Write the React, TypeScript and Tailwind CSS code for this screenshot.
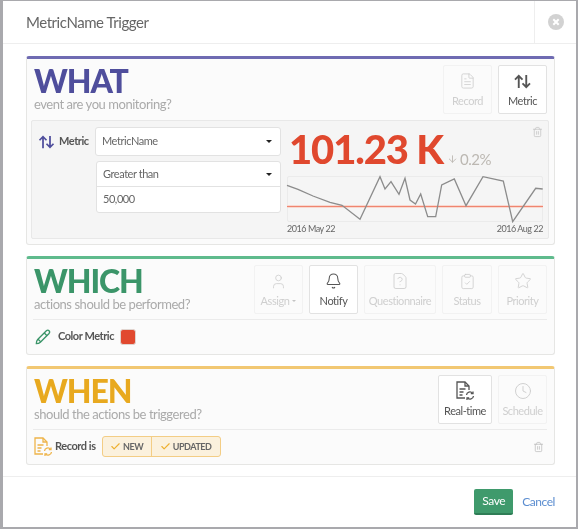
import React from 'react';
import { ArrowDown, Bell, Check, ClipboardCheck, Clock, FileQuestion, FileText, Star, Trash2, User } from 'lucide-react';

const chartPoints = [
  [287, 185.3], [298, 189.3], [313, 196], [330, 202.3], [342, 205.3], [360, 219.3], [380, 176.7], [385, 189],
  [391, 181.7], [399, 194.3], [405, 178.3], [410, 200], [415.5, 204], [420.7, 194], [427.7, 216.7], [435.7, 216.7],
  [441.7, 185], [454.3, 179], [466, 205.7], [483, 176.7], [503.3, 181], [512.7, 221.7], [535.7, 188.3], [542.7, 189],
];

function UpDownIcon({ className }: { className?: string }) {
  return (
    <svg viewBox="0 0 18 16" fill="none" stroke="currentColor" strokeWidth="2" className={className}>
      <path d="M5 15V2M1 6l4-4 4 4" />
      <path d="M13 1v13M9 10l4 4 4-4" />
    </svg>
  );
}

function RecordSyncIcon({ className }: { className?: string }) {
  return (
    <svg viewBox="0 0 20 20" fill="none" stroke="currentColor" strokeWidth="1.3" className={className}>
      <path d="M10 17H2V1h8l4 4v4" />
      <path d="M10 1v4h4M4.5 8h6M4.5 11h4M4.5 14h3" />
      <path d="M11.5 14a3.4 3.4 0 0 1 6-1.8M18.5 15a3.4 3.4 0 0 1-6 1.8" />
      <path d="M18 10.5v2.2h-2.2M12 19v-2.2h2.2" />
    </svg>
  );
}

function PenIcon({ className }: { className?: string }) {
  return (
    <svg viewBox="0 0 18 18" fill="none" stroke="currentColor" strokeWidth="1.5" className={className}>
      <path d="M1.5 16.5c0-2 .4-3.6 1.5-4.7L12.8 2c1-1 2.2-1 3 0 .8.8.8 2 0 3L6 14.8c-1 1-2.5 1.7-4.5 1.7z" />
      <path d="M3.5 11.5l3 3M10.5 4.5l3 3" />
    </svg>
  );
}

function ToolButton({ label, icon, active, caret, w }: { label: string; icon: React.ReactNode; active?: boolean; caret?: boolean; w: string }) {
  return (
    <div className={`${w} h-[49px] rounded-[2px] border flex flex-col items-center pt-[5px] ${active ? 'bg-white border-[#e2e2e2] text-[#555]' : 'border-[#f2f2f2] text-[#cfcfcf]'}`}>
      <div className="h-[20px] flex items-center justify-center">{icon}</div>
      <div className="mt-[2px] text-[11px] leading-[16px] flex items-center gap-[3px] whitespace-nowrap">
        {label}
        {caret && <div className="w-0 h-0 border-x-[2px] border-x-transparent border-t-[2px] border-t-[#c4c4c4]" />}
      </div>
    </div>
  );
}

function Heading({ title, sub, color }: { title: string; sub: string; color: string }) {
  return (
    <div className="pl-[3px]">
      <div className={`text-[32px] leading-[31px] tracking-[-1.1px] font-black ${color}`}>{title}</div>
      <div className="text-[13px] leading-[16px] text-[#aaa]">{sub}</div>
    </div>
  );
}

function Caret() {
  return <div className="w-0 h-0 border-x-[3px] border-x-transparent border-t-[3px] border-t-[#222]" />;
}

export default function App() {
  return (
    <div className="h-[529px] w-[578px] overflow-hidden bg-[#a9a9ad] pt-[1px] pl-[3px] pr-[2px] pb-[2px] text-[#555] tracking-[-0.45px] blur-[0.6px]" style={{ fontFamily: 'Lato, sans-serif' }}>
      <div className="h-full bg-white flex flex-col">
        {/* Modal header */}
        <header className="h-[43px] shrink-0 border-b border-[#eee] flex items-center justify-between">
          <h1 className="pl-[23px] text-[15px] font-normal text-[#666]">MetricName Trigger</h1>
          <div className="w-[42px] h-full border-l border-[#eee] flex items-center justify-center">
            <svg viewBox="0 0 16 16" className="w-[16px] h-[16px]">
              <circle cx="8" cy="8" r="8" fill="#d2d2d2" />
              <path d="M5.3 5.3l5.4 5.4M10.7 5.3l-5.4 5.4" stroke="#fff" strokeWidth="2" />
            </svg>
          </div>
        </header>

        {/* Body */}
        <div className="flex-1 pt-[12px] pl-[23px] flex flex-col gap-[11px]">
          {/* WHAT */}
          <section className="w-[529px] h-[189px] bg-[#fbfbfb] rounded-[3px] border border-[#e6e6e4] border-t-[3px] border-t-[#6f6bb2] px-[4px] pt-[6px]">
            <div className="flex justify-between pr-[3px] h-[49px]">
              <Heading title="WHAT" sub="event are you monitoring?" color="text-[#4f4e9c]" />
              <div className="flex gap-[6px]">
                <ToolButton w="w-[49px]" label="Record" icon={<FileText className="w-[17px] h-[20px]" strokeWidth={1.2} />} />
                <ToolButton w="w-[49px]" label="Metric" active icon={<UpDownIcon className="w-[17px] h-[15px]" />} />
              </div>
            </div>

            <div className="relative mt-[6px] w-[518px] h-[119px] bg-[#f5f5f5] border border-[#e8e8e8] rounded-[2px] flex pt-[6px]">
              <div className="w-[63px] pl-[6px] flex items-center gap-[4px] h-[29px] text-[11px] font-bold text-[#555]">
                <UpDownIcon className="w-[17px] h-[14px] shrink-0 text-[#4f4e9c]" />
                Metric
              </div>
              <div className="w-[186px] flex flex-col gap-[5px] text-[11px] text-[#666]">
                <div className="h-[29px] bg-white border border-[#e2e2e2] rounded-[3px] flex items-center justify-between pl-[6px] pr-[8px]">
                  MetricName
                  <Caret />
                </div>
                <div className="ml-[1px] bg-white border border-[#e2e2e2] rounded-[3px]">
                  <div className="h-[25px] border-b border-[#e2e2e2] flex items-center justify-between pl-[6px] pr-[8px]">
                    Greater than
                    <Caret />
                  </div>
                  <div className="h-[25px] flex items-center pl-[6px]">50,000</div>
                </div>
              </div>
              <div className="ml-[6px] w-[256px]">
                <div className="pl-[2px] h-[49px] flex items-end gap-[4px]">
                  <span className="mb-[5px] text-[40px] leading-[44px] tracking-[-1.1px] font-black text-[#e0482e] whitespace-nowrap">101.23 K</span>
                  <span className="mb-[8px] flex items-center text-[15px] leading-[18px] text-[#bcb8b2]">
                    <ArrowDown className="w-[11px] h-[12px] mr-[2px]" strokeWidth={2} />
                    0.2%
                  </span>
                </div>
                <div className="h-[46px] border border-[#ebebeb] rounded-[2px]">
                  <svg viewBox="288 177 254 44" className="w-full h-full overflow-visible">
                    <line x1="287" y1="206.5" x2="543" y2="206.5" stroke="#f8d8d0" strokeWidth="3" />
                    <line x1="287" y1="206.5" x2="543" y2="206.5" stroke="#ef8570" strokeWidth="1" />
                    <polyline points={chartPoints.map(p => p.join(',')).join(' ')} fill="none" stroke="#8c8c8c" strokeWidth="1.3" />
                  </svg>
                </div>
                <div className="flex justify-between text-[9px] leading-[14px] text-[#666]">
                  <span>2016 May 22</span>
                  <span>2016 Aug 22</span>
                </div>
              </div>
              <Trash2 className="absolute top-[5px] right-[5px] w-[11px] h-[12px] text-[#c0c0c0]" strokeWidth={1.5} />
            </div>
          </section>

          {/* WHICH */}
          <section className="w-[529px] h-[99px] bg-[#fbfbfb] rounded-[3px] border border-[#e6e6e4] border-t-[3px] border-t-[#5fbb8d] px-[4px] pt-[6px]">
            <div className="flex justify-between pr-[3px] h-[49px]">
              <Heading title="WHICH" sub="actions should be performed?" color="text-[#3b9569]" />
              <div className="flex gap-[6px]">
                <ToolButton w="w-[49px]" label="Assign" caret icon={<User className="w-[17px] h-[17px]" strokeWidth={1.2} />} />
                <ToolButton w="w-[49px]" label="Notify" active icon={<Bell className="w-[17px] h-[18px]" strokeWidth={1.5} />} />
                <ToolButton w="w-[72px]" label="Questionnaire" icon={<FileQuestion className="w-[18px] h-[20px]" strokeWidth={1.2} />} />
                <ToolButton w="w-[50px]" label="Status" icon={<ClipboardCheck className="w-[17px] h-[19px]" strokeWidth={1.2} />} />
                <ToolButton w="w-[49px]" label="Priority" icon={<Star className="w-[18px] h-[18px]" strokeWidth={1.2} />} />
              </div>
            </div>
            <div className="mt-[5px] ml-[2px] mr-[3px] border-t border-[#ebebeb] pt-[5px] flex items-center h-[29px]">
              <PenIcon className="w-[16px] h-[16px] ml-[2px] text-[#3b9569]" />
              <span className="ml-[7px] text-[11px] font-bold text-[#555]">Color Metric</span>
              <span className="ml-[6px] w-[16px] h-[16px] rounded-[3px] bg-[#e1492f] border border-[#e0d5d0]" />
            </div>
          </section>

          {/* WHEN */}
          <section className="w-[529px] h-[99px] bg-[#fbfbfb] rounded-[3px] border border-[#e6e6e4] border-t-[3px] border-t-[#f2c873] px-[4px] pt-[6px]">
            <div className="flex justify-between pr-[3px] h-[49px]">
              <Heading title="WHEN" sub="should the actions be triggered?" color="text-[#e8a91f]" />
              <div className="flex gap-[6px]">
                <ToolButton w="w-[54px]" label="Real-time" active icon={<RecordSyncIcon className="w-[20px] h-[20px]" />} />
                <ToolButton w="w-[49px]" label="Schedule" icon={<Clock className="w-[18px] h-[18px]" strokeWidth={1.3} />} />
              </div>
            </div>
            <div className="relative mt-[5px] ml-[2px] mr-[3px] border-t border-[#ebebeb] pt-[5px] flex items-center h-[29px]">
              <RecordSyncIcon className="w-[20px] h-[20px] text-[#eeb44a]" />
              <span className="ml-[2px] text-[11px] font-bold text-[#555]">Record is</span>
              <div className="ml-[6px] h-[21px] flex rounded-[3px] border border-[#f3cd85] bg-[#fbf1dd] text-[9px] font-bold text-[#666]">
                <span className="w-[49px] flex items-center justify-center gap-[2px] border-r border-[#f3cd85]">
                  <Check className="w-[11px] h-[11px] text-[#eeb02f]" strokeWidth={2.5} />
                  NEW
                </span>
                <span className="w-[68px] flex items-center justify-center gap-[2px]">
                  <Check className="w-[11px] h-[11px] text-[#eeb02f]" strokeWidth={2.5} />
                  UPDATED
                </span>
              </div>
              <Trash2 className="absolute right-[3px] top-[11px] w-[11px] h-[12px] text-[#b8b8b8]" strokeWidth={1.5} />
            </div>
          </section>
        </div>

        {/* Footer */}
        <footer className="h-[51px] shrink-0 border-t border-[#eee] flex items-center justify-end gap-[9px] pr-[21px]">
          <button className="w-[39px] h-[26px] rounded-[2px] bg-[#3f9a6c] border-b-2 border-[#2f7d56] text-white text-[12px]">Save</button>
          <a className="text-[12px] text-[#5b8dd0]">Cancel</a>
        </footer>
      </div>
    </div>
  );
}
